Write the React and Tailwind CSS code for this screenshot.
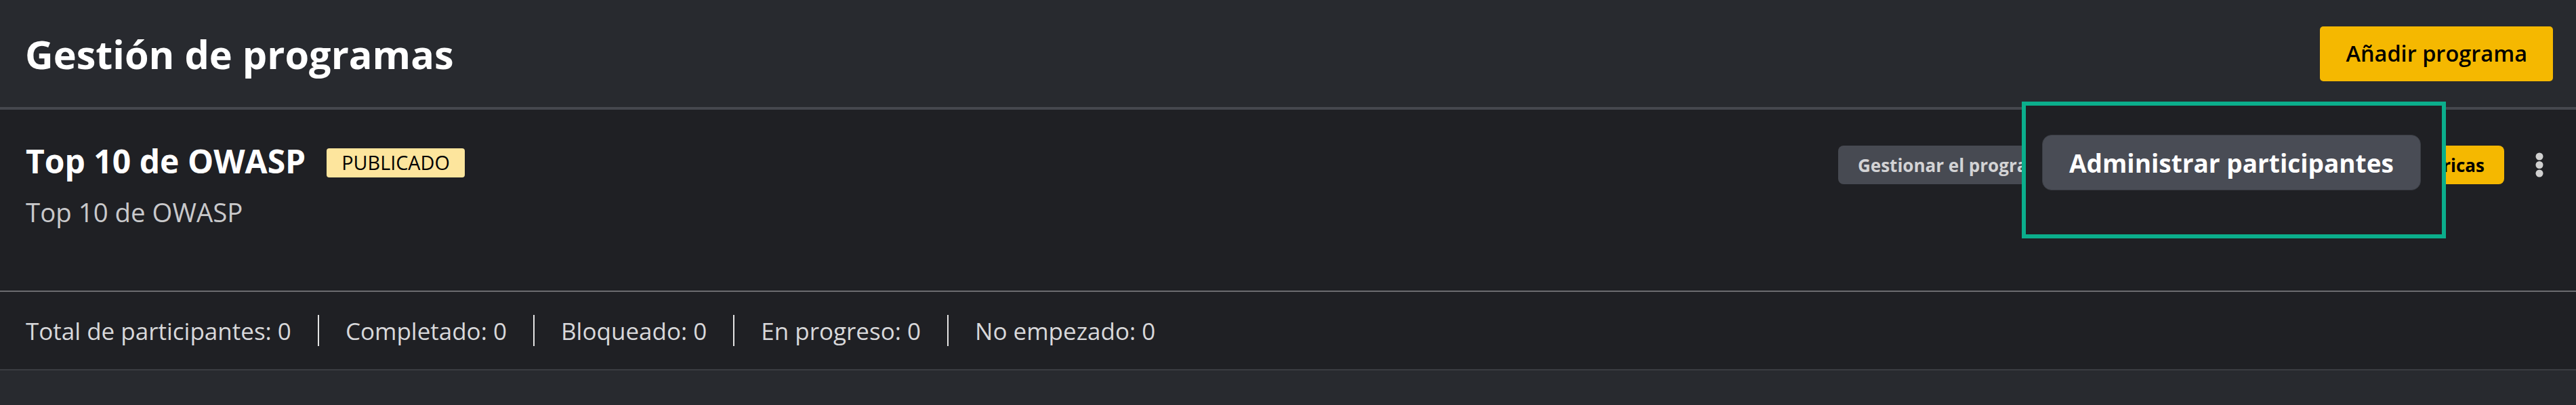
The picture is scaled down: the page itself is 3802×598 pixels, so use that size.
import React from "react";

const stats = [
  { label: "Total de participantes", value: 0 },
  { label: "Completado", value: 0 },
  { label: "Bloqueado", value: 0 },
  { label: "En progreso", value: 0 },
  { label: "No empezado", value: 0 },
];

function DotsIcon() {
  return (
    <svg width="12" height="40" viewBox="0 0 12 40" className="block">
      <circle cx="6" cy="7" r="5.5" fill="#d0d0d0" />
      <circle cx="6" cy="19.5" r="5.5" fill="#d0d0d0" />
      <circle cx="6" cy="32" r="5.5" fill="#d0d0d0" />
    </svg>
  );
}

export default function App() {
  return (
    <div className="relative w-full min-h-[598px] bg-[#282a2f] font-['Open_Sans',sans-serif] overflow-hidden">
      {/* header */}
      <header className="flex h-[162px] items-center justify-between border-b-4 border-[#45474e] bg-[#282a2f] pl-[37px] pr-[34px]">
        <h1 className="text-[57.6px] font-bold leading-none text-white mt-[2px]">Gestión de programas</h1>
        <button className="flex h-[81px] items-center rounded-[5px] bg-[#f5b800] px-[38px] text-[32.5px] font-semibold leading-none text-black">
          Añadir programa
        </button>
      </header>

      {/* program card */}
      <section className="flex items-start justify-between border-b-2 border-[#6c6c70] bg-[#1f2024] pl-[38px] pr-[48px] pt-[52px] pb-[97px]">
        <div className="flex flex-col">
          <div className="flex items-center">
            <h2 className="text-[48px] font-bold leading-none text-white">Top 10 de OWASP</h2>
            <span className="ml-[31px] mt-[4px] flex h-[43px] items-center rounded-[4px] bg-[#fde59d] px-[22px] text-[28.8px] leading-none text-black">
              PUBLICADO
            </span>
          </div>
          <p className="mt-[32px] text-[38.4px] leading-none text-[#c9c9cb]">Top 10 de OWASP</p>
        </div>

        <div className="mt-[1px] flex items-center">
          <div className="flex w-[983px] items-center justify-between">
            <button className="flex h-[57px] shrink-0 items-center whitespace-nowrap rounded-[8px] bg-[#474a52] px-[29px] text-[26px] font-bold leading-none text-[#d3d3d5]">
              Gestionar el programa
            </button>
            <button className="flex h-[57px] shrink-0 items-center whitespace-nowrap rounded-[8px] bg-[#f5b800] px-[29px] text-[26px] font-bold leading-none text-black">
              Ver métricas
            </button>
          </div>
          <div className="ml-[46px]">
            <DotsIcon />
          </div>
        </div>
      </section>

      {/* stats row */}
      <div className="flex h-[116px] items-center border-b-2 border-[#3a3c42] bg-[#1f2024] pl-[38px]">
        {stats.map((s, i) => (
          <div key={s.label} className="flex items-center">
            {i > 0 && <div className="mx-[39px] h-[46px] w-[2px] bg-[#e4e4e4]" />}
            <span className="text-[35px] leading-none text-[#d8d8da]">
              {s.label}: {s.value}
            </span>
          </div>
        ))}
      </div>

      {/* highlight callout */}
      <div className="absolute left-[2984px] top-[150px] flex h-[202px] w-[626px] items-start border-[6px] border-[#0bae8c] bg-[#1f2024] pl-[24px] pt-[43px]">
        <button className="flex h-[82px] w-[559px] items-center justify-center rounded-[14px] border border-[#3b3e45] bg-[#494c55] text-[37px] font-bold leading-none text-white">
          Administrar participantes
        </button>
      </div>
    </div>
  );
}
